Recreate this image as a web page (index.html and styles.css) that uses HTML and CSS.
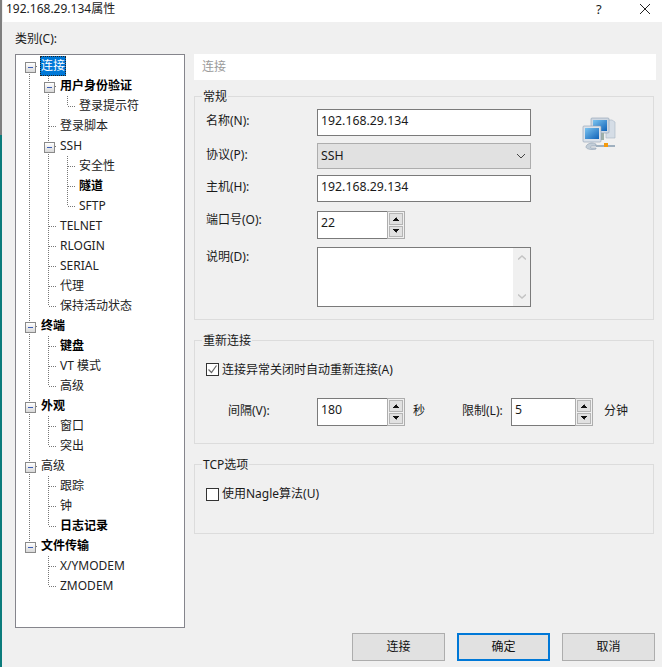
FILE: index.html
```html
<!DOCTYPE html>
<html lang="en">
<head>
<meta charset="UTF-8">
<meta name="viewport" content="width=device-width, initial-scale=1.0">
<title>192.168.29.134属性</title>
<link rel="stylesheet" href="styles.css">
</head>
<body>
<div class="desktop-edge"></div>
<div class="dialog">
    <div class="titlebar">
        <span class="title">192.168.29.134属性</span>
        <span class="help">?</span>
        <svg class="close" width="10" height="10" viewBox="0 0 10 10"><path d="M0 0L10 10M10 0L0 10" stroke="#222" stroke-width="1" fill="none"/></svg>
    </div>
    <div class="content">
        <div class="left">
            <div class="category-label">类别(C):</div>
            <div class="tree">
                <div class="row"><i class="cell box"></i><span class="node selected">连接</span></div>
                <div class="row"><i class="cell line"></i><i class="cell box"></i><span class="node bold">用户身份验证</span></div>
                <div class="row"><i class="cell line"></i><i class="cell line"></i><i class="cell end"></i><span class="node">登录提示符</span></div>
                <div class="row"><i class="cell line"></i><i class="cell tee"></i><span class="node">登录脚本</span></div>
                <div class="row"><i class="cell line"></i><i class="cell box"></i><span class="node">SSH</span></div>
                <div class="row"><i class="cell line"></i><i class="cell line"></i><i class="cell tee"></i><span class="node">安全性</span></div>
                <div class="row"><i class="cell line"></i><i class="cell line"></i><i class="cell tee"></i><span class="node bold">隧道</span></div>
                <div class="row"><i class="cell line"></i><i class="cell line"></i><i class="cell end"></i><span class="node">SFTP</span></div>
                <div class="row"><i class="cell line"></i><i class="cell tee"></i><span class="node">TELNET</span></div>
                <div class="row"><i class="cell line"></i><i class="cell tee"></i><span class="node">RLOGIN</span></div>
                <div class="row"><i class="cell line"></i><i class="cell tee"></i><span class="node">SERIAL</span></div>
                <div class="row"><i class="cell line"></i><i class="cell tee"></i><span class="node">代理</span></div>
                <div class="row"><i class="cell line"></i><i class="cell end"></i><span class="node">保持活动状态</span></div>
                <div class="row"><i class="cell box"></i><span class="node bold">终端</span></div>
                <div class="row"><i class="cell line"></i><i class="cell tee"></i><span class="node bold">键盘</span></div>
                <div class="row"><i class="cell line"></i><i class="cell tee"></i><span class="node">VT 模式</span></div>
                <div class="row"><i class="cell line"></i><i class="cell end"></i><span class="node">高级</span></div>
                <div class="row"><i class="cell box"></i><span class="node bold">外观</span></div>
                <div class="row"><i class="cell line"></i><i class="cell tee"></i><span class="node">窗口</span></div>
                <div class="row"><i class="cell line"></i><i class="cell end"></i><span class="node">突出</span></div>
                <div class="row"><i class="cell box"></i><span class="node">高级</span></div>
                <div class="row"><i class="cell line"></i><i class="cell tee"></i><span class="node">跟踪</span></div>
                <div class="row"><i class="cell line"></i><i class="cell tee"></i><span class="node">钟</span></div>
                <div class="row"><i class="cell line"></i><i class="cell end"></i><span class="node bold">日志记录</span></div>
                <div class="row"><i class="cell box last"></i><span class="node bold">文件传输</span></div>
                <div class="row"><i class="cell"></i><i class="cell tee"></i><span class="node">X/YMODEM</span></div>
                <div class="row"><i class="cell"></i><i class="cell end"></i><span class="node">ZMODEM</span></div>
            </div>
        </div>
        <div class="right">
            <div class="page-header">连接</div>

            <div class="group group-general">
                <div class="group-title">常规</div>
                <div class="form">
                    <label class="field-label">名称(N):</label>
                    <div class="input wide">192.168.29.134</div>
                    <div class="computer-icon">
                        <svg width="34" height="34" viewBox="0 0 34 34">
                            <defs>
                                <linearGradient id="screen" x1="0" y1="0" x2="1" y2="1">
                                    <stop offset="0" stop-color="#7cc4f0"/>
                                    <stop offset="1" stop-color="#0f62b8"/>
                                </linearGradient>
                            </defs>
                            <path d="M24 3h6l3 2v16h-9z" fill="#d5dde6" stroke="#a9b6c4" stroke-width=".6"/>
                            <rect x="9" y="1" width="18" height="15" rx="1" fill="#cfd8e2" stroke="#8fa0b2" stroke-width=".6"/>
                            <rect x="11" y="3" width="14" height="11" fill="url(#screen)"/>
                            <rect x="16" y="16" width="6" height="7" fill="#9fb0a8"/>
                            <rect x="1" y="9" width="18" height="16" rx="1" fill="#dbe2ea" stroke="#8fa0b2" stroke-width=".6"/>
                            <rect x="3" y="11" width="14" height="11" fill="url(#screen)"/>
                            <path d="M4 30c0-2 3-4 6-4 2 0 3 1 4 1v2h-4c-1 0-2 1-1 2h5v1c-1 .5-2 .5-4 .5-3 0-6-1-6-2.500z" fill="#c3ced8" stroke="#8fa0b2" stroke-width=".6"/>
                            <rect x="14" y="28" width="19" height="2" fill="#9fb0bf"/>
                            <rect x="22" y="26" width="4" height="4" fill="#f59a0c"/>
                        </svg>
                    </div>

                    <label class="field-label">协议(P):</label>
                    <div class="select wide">
                        <span>SSH</span>
                        <svg width="10" height="6" viewBox="0 0 10 6"><path d="M1 1l4 4 4-4" stroke="#444" fill="none"/></svg>
                    </div>

                    <label class="field-label">主机(H):</label>
                    <div class="input wide">192.168.29.134</div>

                    <label class="field-label tight">端口号(O):</label>
                    <div class="spin-wrap">
                        <div class="input spin-input">22</div>
                        <div class="spinner"><span class="spin-up"></span><span class="spin-down"></span></div>
                    </div>

                    <label class="field-label tight1">说明(D):</label>
                    <div class="input wide memo">
                        <div class="memo-scroll">
                            <svg width="8" height="5" viewBox="0 0 8 5"><path d="M0 4.500L4 1l4 3.500" stroke="#c4c4c4" stroke-width="1.500" fill="none"/></svg>
                            <svg width="8" height="5" viewBox="0 0 8 5"><path d="M0 .5L4 4l4-3.500" stroke="#c4c4c4" stroke-width="1.500" fill="none"/></svg>
                        </div>
                    </div>
                </div>
            </div>

            <div class="group group-reconnect">
                <div class="group-title">重新连接</div>
                <div class="check-row">
                    <span class="checkbox">
                        <svg width="11" height="11" viewBox="0 0 11 11"><path d="M1.500 5.500l3 3 5-7" stroke="#666" stroke-width="1.200" fill="none"/></svg>
                    </span>
                    <span class="check-text">连接异常关闭时自动重新连接(A)</span>
                </div>
                <div class="interval-row">
                    <span class="interval-label">间隔(V):</span>
                    <div class="spin-wrap">
                        <div class="input spin-input">180</div>
                        <div class="spinner"><span class="spin-up"></span><span class="spin-down"></span></div>
                    </div>
                    <span class="unit-sec">秒</span>
                    <span class="limit-label">限制(L):</span>
                    <div class="spin-wrap">
                        <div class="input spin-input short">5</div>
                        <div class="spinner"><span class="spin-up"></span><span class="spin-down"></span></div>
                    </div>
                    <span class="unit-min">分钟</span>
                </div>
            </div>

            <div class="group group-tcp">
                <div class="group-title">TCP选项</div>
                <div class="check-row">
                    <span class="checkbox"></span>
                    <span>使用Nagle算法(U)</span>
                </div>
            </div>
        </div>
    </div>
    <div class="buttons">
        <button class="btn">连接</button>
        <button class="btn default">确定</button>
        <button class="btn">取消</button>
    </div>
</div>
</body>
</html>
```
FILE: styles.css
```css
* {
    box-sizing: border-box;
}

html, body {
    height: 100%;
}

body {
    display: flex;
    margin: 0;
    overflow: hidden;
    background: #f0f0f0;
    font-family: "Noto Sans", "Noto Sans CJK SC", sans-serif;
    font-size: 12px;
    line-height: 16px;
    color: #1a1a1a;
}

.desktop-edge {
    width: 2px;
    flex: none;
    margin-right: 1px;
    background: linear-gradient(to bottom, #7f7f7f 0, #7f7f7f 135px, #0b7c7c 135px, #0b7c7c 100%);
}

.dialog {
    flex: 1;
    display: flex;
    flex-direction: column;
    min-width: 0;
}

/* title bar */
.titlebar {
    display: flex;
    flex: none;
    align-items: center;
    height: 22px;
    padding: 0 0 4px 3px;
    background: #fff;
}

.title {
    flex: 1;
    color: #222;
}

.help {
    width: 44px;
    font-size: 13px;
}

.close {
    margin-right: 12px;
}

/* main area */
.content {
    display: flex;
    flex: none;
    padding-left: 12px;
}

.left {
    width: 170px;
    flex: none;
}

.category-label {
    margin-top: 9px;
    height: 23px;
}

.tree {
    height: 574px;
    padding: 1px 0 0 4px;
    background: #fff;
    border: 1px solid #85858c;
}

.row {
    display: flex;
    align-items: center;
    height: 20px;
}

.cell {
    position: relative;
    display: block;
    width: 19px;
    height: 20px;
    flex: none;
}

/* tree connectors */
.line,
.tee,
.box {
    background: repeating-linear-gradient(to bottom, #777 0, #777 1px, transparent 1px, transparent 2px) 9px 0 / 1px 100% no-repeat;
}

.end {
    background: repeating-linear-gradient(to bottom, #777 0, #777 1px, transparent 1px, transparent 2px) 9px 0 / 1px 10px no-repeat;
}

.tee::after,
.end::after,
.box::after {
    content: "";
    position: absolute;
    left: 10px;
    top: 10px;
    width: 8px;
    height: 1px;
    background: repeating-linear-gradient(to right, #777 0, #777 1px, transparent 1px, transparent 2px);
}

.row:first-child .box {
    background-position: 9px 10px;
}

.box.last {
    background-size: 1px 10px;
}

.box::before {
    content: "";
    position: absolute;
    z-index: 1;
    left: 5px;
    top: 6px;
    width: 9px;
    height: 9px;
    border: 1px solid #8a8a8a;
    background: linear-gradient(to right, #3d5fb5, #3d5fb5) center / 5px 1px no-repeat, linear-gradient(to bottom, #fff, #d8d8d8);
}

.node {
    margin-left: 1px;
    padding: 0 1px;
    height: 16px;
    white-space: pre;
    color: #222;
}

.node.bold {
    font-weight: 700;
    color: #000;
}

.node.selected {
    padding: 1px;
    height: 20px;
    line-height: 18px;
    background: #0078d7;
    outline: 1px dotted #222;
    outline-offset: -1px;
    color: #fff;
}

/* right side */
.right {
    width: 462px;
    margin-left: 9px;
    padding-top: 32px;
}

.page-header {
    height: 26px;
    padding-left: 8px;
    line-height: 25px;
    background: #fff;
    color: #9a9a9a;
}

.group {
    width: 460px;
    border: 1px solid #dcdcdc;
}

.group-title {
    width: fit-content;
    margin: -8px 0 0 7px;
    padding: 0 1px;
    background: #f0f0f0;
}

.group-general {
    height: 224px;
    margin-top: 16px;
}

.group-reconnect {
    height: 104px;
    margin-top: 20px;
}

.group-tcp {
    height: 70px;
    margin-top: 20px;
}

.form {
    display: grid;
    grid-template-columns: 111px 214px auto;
    grid-template-rows: 34px 32px 36px 36px 60px;
    align-items: start;
    margin-top: 4px;
    padding-left: 11px;
}

.field-label {
    grid-column: 1;
    padding-top: 4px;
}

.field-label.tight {
    padding-top: 1px;
}

.field-label.tight1 {
    padding-top: 2px;
}

.form .wide,
.form .spin-wrap {
    grid-column: 2;
}

.input {
    height: 27px;
    padding-left: 3px;
    line-height: 22px;
    font-size: 12.3px;
    background: #fff;
    border: 1px solid #7a7a7a;
}

.wide {
    width: 214px;
}

.select {
    display: flex;
    align-items: center;
    justify-content: space-between;
    height: 26px;
    padding: 0 4px 0 3px;
    font-size: 12.3px;
    background: #e1e1e1;
    border: 1px solid #adadad;
}

.memo {
    display: flex;
    justify-content: flex-end;
    height: 60px;
    padding: 0;
}

.memo-scroll {
    display: flex;
    flex-direction: column;
    align-items: center;
    justify-content: space-between;
    width: 17px;
    padding: 7px 0;
    background: #f0f0f0;
}

.computer-icon {
    grid-row: 1 / 3;
    grid-column: 3;
    margin: 8px 0 0 51px;
}

/* number field with arrows */
.spin-wrap {
    display: flex;
    height: 28px;
}

.spin-input {
    width: 70px;
    height: 28px;
    border-right: none;
}

.spin-input.short {
    width: 64px;
}

.spinner {
    display: flex;
    flex-direction: column;
    gap: 1px;
    width: 18px;
    padding: 1px;
    background: #f0f0f0;
    border: 1px solid #adadad;
}

.spin-up,
.spin-down {
    flex: 1;
    border: 1px solid #b5b5b5;
    background-color: #e1e1e1;
    background-repeat: no-repeat;
    background-size: 3.5px 4px;
    background-position: calc(50% - 1.75px) center, calc(50% + 1.75px) center;
}

.spin-up {
    background-image: linear-gradient(to bottom right, transparent 50%, #111 50%), linear-gradient(to bottom left, transparent 50%, #111 50%);
}

.spin-down {
    background-image: linear-gradient(to top right, transparent 50%, #111 50%), linear-gradient(to top left, transparent 50%, #111 50%);
}

.check-row {
    display: flex;
    align-items: center;
    gap: 3px;
    margin: 11px 0 0 11px;
}

.check-text {
    padding-top: 2px;
}

.checkbox {
    display: flex;
    align-items: center;
    justify-content: center;
    width: 13px;
    height: 13px;
    background: #fff;
    border: 1px solid #333;
}

.interval-row {
    display: flex;
    align-items: center;
    margin-top: 20px;
    padding-left: 33px;
}

.interval-label,
.limit-label,
.unit-sec,
.unit-min {
    padding-bottom: 2px;
}

.interval-label {
    width: 89px;
}

.unit-sec {
    width: 57px;
    padding-left: 8px;
}

.limit-label {
    width: 49px;
}

.unit-min {
    padding-left: 11px;
}

.group-tcp .check-row {
    margin-top: 13px;
}

/* bottom buttons */
.buttons {
    display: flex;
    flex: none;
    gap: 12px;
    margin-top: 5px;
    padding-left: 349px;
}

.btn {
    width: 93px;
    height: 28px;
    padding: 0;
    font: inherit;
    color: #111;
    background: #e1e1e1;
    border: 1px solid #adadad;
}

.btn.default {
    border: 2px solid #0078d7;
}
```
